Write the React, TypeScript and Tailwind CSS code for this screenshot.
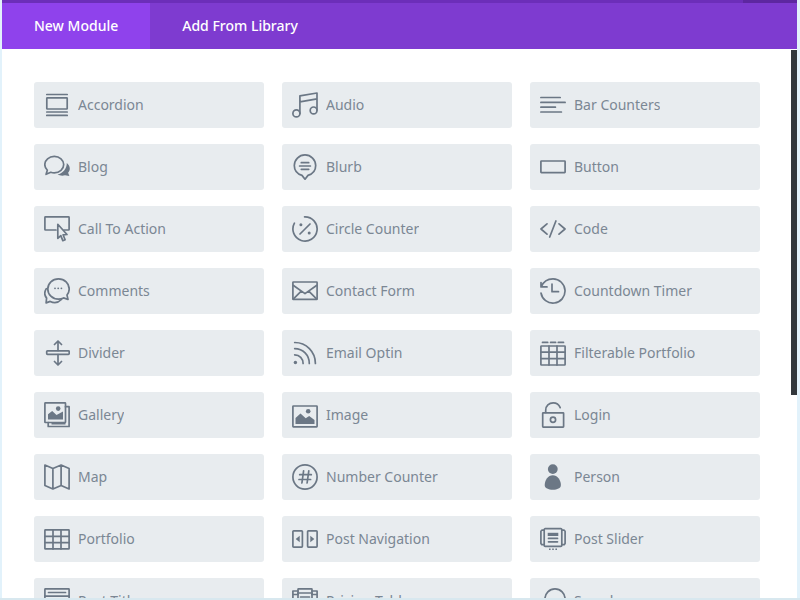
import type {ReactNode} from 'react';

type Module = {name: string; icon: ReactNode};

const solid = {fill: 'currentColor', stroke: 'none'};

const modules: Module[] = [
  {
    name: 'Accordion',
    icon: (
      <>
        <path d="M2.8 2.5h20.4M2.8 20h20.4M2.8 23.4h20.4" />
        <rect x="2.8" y="5.8" width="20.4" height="11.2" rx="0.5" />
      </>
    )
  },
  {
    name: 'Audio',
    icon: (
      <>
        <path d="M7.9 21.4V3.9L25 1v17M7.9 9.8L25 6.8" />
        <circle cx="4.4" cy="21.4" r="3.5" />
        <circle cx="21.6" cy="18.4" r="3.4" />
      </>
    )
  },
  {
    name: 'Bar Counters',
    icon: <path d="M.9 5.5h19.3M.9 10.4h24.2M.9 15.2h14.5M.9 20h20.5" />
  },
  {
    name: 'Blog',
    icon: (
      <>
        <path d="M10.3 2.4c5.3 0 9.4 3.6 9.4 8.2s-4.1 8.3-9.4 8.3c-1.2 0-2.4-.2-3.5-.6l-4.7 2 1.2-4.1C1.6 14.8.8 12.8.8 10.6.8 6 5 2.4 10.3 2.4z" />
        <path
          {...solid}
          d="M22.8 9c1.8 1.5 3 3.4 3 5.6 0 1.6-.6 3-1.7 4.2l1.3 3.3-4.4-.8c-2.5.9-5.3.4-7.4-.7 5.3-1.3 9.3-5.900 9.200-11.600z"
        />
      </>
    )
  },
  {
    name: 'Blurb',
    icon: (
      <>
        <path d="M13 .9a10.7 10.7 0 0 1 10.7 10.7c0 4.6-3 8.4-7.7 9.8L13 25.2l-3-3.8c-4.7-1.4-7.7-5.2-7.7-9.8A10.7 10.7 0 0 1 13 .9z" />
        <path d="M9.3 8.7h7.4M7.6 12h10.8M9.3 15.3h7.4" />
      </>
    )
  },
  {
    name: 'Button',
    icon: <rect x="0.9" y="7" width="24.2" height="11.6" rx="0.5" />
  },
  {
    name: 'Call To Action',
    icon: (
      <>
        <path d="M12 14H1.5a.6.6 0 0 1-.6-.6V1.500c0-.4.3-.6.6-.6h23c.4 0 .6.3.6.6v11.9c0 .3-.2.6-.6.6H20" />
        <path d="M13.800 8.300v14l3-2.700 2 5 2.300-.9-2-4.900 3.900-.3z" />
      </>
    )
  },
  {
    name: 'Circle Counter',
    icon: (
      <>
        <path d="M12.6.9A12.1 12.1 0 1 1 2.4 7.2M18 8L8 18" />
        <circle {...solid} cx="8.9" cy="8.8" r="1.5" />
        <circle {...solid} cx="17.2" cy="17" r="1.5" />
      </>
    )
  },
  {
    name: 'Code',
    icon: <path d="M7 7.8L1 13l6 5.2M19 7.8l6 5.2-6 5.2M15.9 5L9.7 21" />
  },
  {
    name: 'Comments',
    icon: (
      <>
        <path d="M14.5.9c6.1 0 10.7 4.5 10.7 10 0 2.4-.9 4.5-2.2 6.2l1 4.4-4.4-1.6c-1.5.8-3.2 1.2-5.1 1.2-6.1 0-10.7-4.5-10.7-10.2S8.4.9 14.5.9z" />
        <path d="M2.3 10.6c-1.9 3-1.9 6.8.3 9.5l-.5 4.8 4.1-1.5c4 2.1 8.3 1.1 11.2-1.9" />
        <circle {...solid} cx="11" cy="10.3" r="0.9" />
        <circle {...solid} cx="14.2" cy="10.3" r="0.9" />
        <circle {...solid} cx="17.4" cy="10.3" r="0.9" />
      </>
    )
  },
  {
    name: 'Contact Form',
    icon: (
      <>
        <rect x="0.9" y="4" width="24.2" height="17.4" rx="0.5" />
        <path d="M1.5 7.5L13 15.6l11.5-8.1M1.5 20.8l7.7-7.6M24.5 20.8l-7.7-7.6" />
      </>
    )
  },
  {
    name: 'Countdown Timer',
    icon: (
      <path d="M1 4.5v4.4h6M1.2 8.9C3.2 4 7.7.9 13 .9A12.1 12.1 0 1 1 1 15M12 6v7.7h6.5" />
    )
  },
  {
    name: 'Divider',
    icon: (
      <>
        <rect x="2.7" y="10.8" width="22.5" height="3.5" rx="0.8" />
        <path d="M14 10.5V1.2M10.5 4.5L14 1l3.5 3.5M14 14.5v10M10.5 21.5L14 25l3.5-3.5" />
      </>
    )
  },
  {
    name: 'Email Optin',
    icon: (
      <>
        <path d="M2.7 2.5c11.6 0 20.7 9.3 20.7 21M2.7 8.6c8.3 0 14.6 6.6 14.6 14.900M2.700 14.800c4.900 0 8.400 3.900 8.400 8.700" />
        <circle {...solid} cx="3.4" cy="22.5" r="1.7" />
      </>
    )
  },
  {
    name: 'Filterable Portfolio',
    icon: (
      <>
        <path d="M2.5 2.4h5.2M10.6 2.4h5M18.3 2.4h5.2" />
        <rect x="0.9" y="6" width="24.2" height="19" rx="0.5" />
        <path d="M1 12.2h24M1 18.6h24M9 6v19M17 6v19" />
      </>
    )
  },
  {
    name: 'Gallery',
    icon: (
      <>
        <rect x="0.9" y="0.9" width="20.6" height="19.6" rx="0.5" />
        <path d="M21.5 4.7h3.6v19.8H4.2v-3.8" />
        <path
          {...solid}
          d="M4 17.5v-5.3l4.2-3.3 4.3 4 6.5-3.4v8zM7.5 20h14v2.500h-14z"
        />
        <circle {...solid} cx="14.2" cy="6.6" r="2.3" />
      </>
    )
  },
  {
    name: 'Image',
    icon: (
      <>
        <rect x="0.9" y="4" width="24.2" height="20.8" rx="0.5" />
        <path {...solid} d="M3.5 22v-6l5-4.5 5.2 4.8 3.5-2.3 5.3 4v4z" />
        <circle {...solid} cx="16.2" cy="9.2" r="2.3" />
      </>
    )
  },
  {
    name: 'Login',
    icon: (
      <>
        <rect x="2.7" y="10.8" width="20.9" height="14.3" rx="0.5" />
        <path d="M5.7 10.500V8.200C5.700 4 9 .9 13.200.9c3 0 5.700 1.700 7 4.700" />
        <circle cx="13" cy="17.7" r="2.6" />
      </>
    )
  },
  {
    name: 'Map',
    icon: (
      <path d="M.9 1l8 3.500 8.200-3.500 8 3.500V25l-8-3.500L8.900 25l-8-3.500zM8.900 4.500V25M17.100 1v20.500" />
    )
  },
  {
    name: 'Number Counter',
    icon: (
      <>
        <circle cx="13" cy="13" r="12.1" />
        <path d="M11.6 6.8L9.9 19M16.8 6.8L15.1 19M7.7 10.7h11.6M7 15.5h11.6" />
      </>
    )
  },
  {
    name: 'Person',
    icon: (
      <g {...solid}>
        <circle cx="12.8" cy="5.1" r="4.9" />
        <path d="M12.8 11.2c4.6 0 8.1 4.9 8.1 9.8 0 3.4-3.7 4.7-8.1 4.7S4.7 24.4 4.7 21c0-4.9 3.5-9.8 8.1-9.8z" />
      </g>
    )
  },
  {
    name: 'Portfolio',
    icon: (
      <>
        <rect x="0.9" y="3.9" width="24.2" height="19" rx="0.5" />
        <path d="M1 10.3h24M1 16.6h24M9 4v19M17 4v19" />
      </>
    )
  },
  {
    name: 'Post Navigation',
    icon: (
      <>
        <rect x="0.9" y="4.8" width="9.5" height="16.3" rx="0.8" />
        <rect x="15.6" y="4.8" width="9.5" height="16.3" rx="0.8" />
        <path {...solid} d="M7.7 9.7v6.6l-4-3.3zM18.3 9.7v6.6l4-3.3z" />
      </>
    )
  },
  {
    name: 'Post Slider',
    icon: (
      <>
        <rect x="4.2" y="2.7" width="17.6" height="17.6" rx="1" />
        <path d="M4 4.2H1.8l-.9 1v12.3l.9 1.2H4M22 4.2h2.2l.9 1v12.3l-.9 1.2H22M8.5 12.400h9M8.500 15.800h9" />
        <path {...solid} d="M7.7 6.800h10.600v3.200H7.700z" />
        <path
          {...solid}
          d="M9 22.500h1.600v1.500H9zM12.200 22.500h1.600v1.500h-1.600zM15.400 22.500H17v1.500h-1.600z"
        />
      </>
    )
  },
  {
    name: 'Post Title',
    icon: (
      <>
        <rect x="0.9" y="0.9" width="24.2" height="24.2" rx="0.5" />
        <path d="M4.5 4.5h17M1 8.2h24" />
      </>
    )
  },
  {
    name: 'Pricing Tables',
    icon: (
      <>
        <rect x="6" y="0.9" width="14" height="24.2" rx="0.5" />
        <path d="M6 3H.9v20H6M20 3h5.1v20H20M6 5h14M1 6.5h5M20 6.5h5M8.5 9h9" />
      </>
    )
  },
  {
    name: 'Search',
    icon: (
      <>
        <circle cx="15" cy="11" r="10.1" />
        <path d="M8 18.5L1.5 25" />
      </>
    )
  }
];

function ModuleButton({name, icon}: Module) {
  return (
    <button
      type="button"
      className="flex h-[46px] items-center gap-2 rounded-[3px] bg-[#e8ecef] px-2.5 text-left text-sm text-[#7b8794] hover:bg-[#dfe5e9]"
    >
      <svg
        viewBox="0 0 26 26"
        className="size-[26px] shrink-0 text-[#6b7785]"
        fill="none"
        stroke="currentColor"
        strokeWidth="1.7"
        strokeLinecap="round"
        strokeLinejoin="round"
        aria-hidden="true"
      >
        {icon}
      </svg>
      <span className="truncate">{name}</span>
    </button>
  );
}

export default function App() {
  return (
    <div className="flex h-screen flex-col overflow-hidden border-b-2 border-[#d8e8ef] bg-[#e2f2fb] pr-[3px] pl-0.5 font-['Noto_Sans','Open_Sans',sans-serif]">
      <div className="flex h-[3px] shrink-0 bg-[#6c2eb9]">
        <div className="ml-auto w-[54px] bg-[#5d27a0]" />
      </div>
      <nav className="flex h-[46px] shrink-0 bg-[#7e3bd0] text-sm font-medium text-white">
        <button type="button" className="bg-[#8f42ec] px-8">
          New Module
        </button>
        <button type="button" className="px-8">
          Add From Library
        </button>
      </nav>
      <main className="flex min-h-0 flex-1 bg-white">
        <div className="grid min-w-0 flex-1 auto-rows-max grid-cols-3 gap-x-[18px] gap-y-4 overflow-hidden py-[33px] pr-[31px] pl-8">
          {modules.map((module) => (
            <ModuleButton key={module.name} {...module} />
          ))}
        </div>
        <div className="w-1.5 shrink-0 pt-px">
          <div className="h-[63%] bg-[#32373c]" />
        </div>
      </main>
    </div>
  );
}
